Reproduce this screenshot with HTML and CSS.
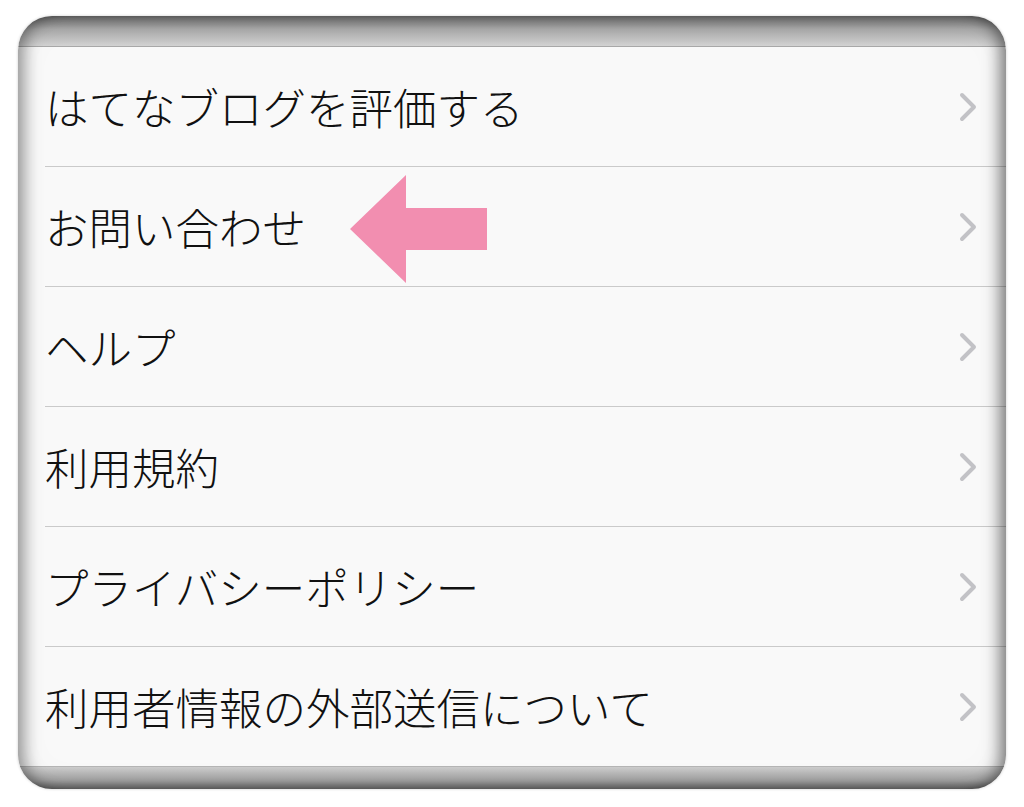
FILE: index.html
```html
<!DOCTYPE html>
<html lang="ja">
<head>
<meta charset="utf-8">
<title>設定</title>
<link rel="stylesheet" href="styles.css">
</head>
<body>
<div class="frame">
  <div class="band band-top"></div>
  <ul class="list">
    <li class="row"><span class="label">はてなブログを評価する</span><span class="chev"><svg width="22" height="32" viewBox="0 0 22 32"><path d="M4 4 L16 16 L4 28" fill="none" stroke="#c2c2c6" stroke-width="4" stroke-linecap="round" stroke-linejoin="round"/></svg></span></li>
    <li class="row"><span class="label">お問い合わせ</span>
      <svg class="arrow" width="140" height="112" viewBox="0 0 140 112"><polygon points="0,56 56,2 56,35 137,35 137,77 56,77 56,110" fill="#f28eb0"/></svg>
      <span class="chev"><svg width="22" height="32" viewBox="0 0 22 32"><path d="M4 4 L16 16 L4 28" fill="none" stroke="#c2c2c6" stroke-width="4" stroke-linecap="round" stroke-linejoin="round"/></svg></span></li>
    <li class="row"><span class="label">ヘルプ</span><span class="chev"><svg width="22" height="32" viewBox="0 0 22 32"><path d="M4 4 L16 16 L4 28" fill="none" stroke="#c2c2c6" stroke-width="4" stroke-linecap="round" stroke-linejoin="round"/></svg></span></li>
    <li class="row"><span class="label">利用規約</span><span class="chev"><svg width="22" height="32" viewBox="0 0 22 32"><path d="M4 4 L16 16 L4 28" fill="none" stroke="#c2c2c6" stroke-width="4" stroke-linecap="round" stroke-linejoin="round"/></svg></span></li>
    <li class="row"><span class="label">プライバシーポリシー</span><span class="chev"><svg width="22" height="32" viewBox="0 0 22 32"><path d="M4 4 L16 16 L4 28" fill="none" stroke="#c2c2c6" stroke-width="4" stroke-linecap="round" stroke-linejoin="round"/></svg></span></li>
    <li class="row last"><span class="label">利用者情報の外部送信について</span><span class="chev"><svg width="22" height="32" viewBox="0 0 22 32"><path d="M4 4 L16 16 L4 28" fill="none" stroke="#c2c2c6" stroke-width="4" stroke-linecap="round" stroke-linejoin="round"/></svg></span></li>
  </ul>
  <div class="band band-bottom"></div>
</div>
</body>
</html>
```
FILE: styles.css
```css
html, body {
  margin: 0;
  padding: 0;
  background: #ffffff;
}
body {
  width: 1024px;
  height: 807px;
  overflow: hidden;
  font-family: "Noto Sans CJK JP", "Noto Sans", sans-serif;
}
.frame {
  position: relative;
  margin: 16px 0 0 18px;
  width: 988px;
  height: 773px;
  border-radius: 34px;
  overflow: hidden;
  background: #f9f9f9;
  display: flex;
  flex-direction: column;
  box-shadow: 0 0 3px rgba(0,0,0,0.2);
}
.frame::after {
  content: "";
  position: absolute;
  inset: 0;
  border-radius: 34px;
  pointer-events: none;
  box-shadow:
    inset 14px 0 16px -8px rgba(0,0,0,0.4),
    inset -14px 0 16px -8px rgba(0,0,0,0.5),
    inset 0 0 40px rgba(0,0,0,0.04);
}
.band {
  flex: none;
}
.band-top {
  height: 30px;
  background: linear-gradient(#6a6a6a 0%, #a9a9a9 45%, #d2d2d2 100%);
  border-bottom: 1px solid #a8a8a8;
}
.band-bottom {
  height: 22px;
  background: linear-gradient(#cdcdcd 0%, #a0a0a0 60%, #666666 100%);
}
.list {
  list-style: none;
  margin: 0;
  padding: 0;
  flex: none;
}
.row {
  position: relative;
  height: 119px;
  margin-left: 27px;
  border-bottom: 1px solid #cacaca;
  display: flex;
  align-items: center;
  justify-content: space-between;
}
.row.last {
  margin-left: 0;
  padding-left: 27px;
  border-bottom-color: #b5b5b5;
}
.label {
  font-size: 43.5px;
  font-weight: 300;
  color: #111;
  line-height: 1;
}
.chev {
  display: flex;
  margin-right: 26px;
}
.arrow {
  position: absolute;
  left: 305px;
  top: 6px;
}
```
